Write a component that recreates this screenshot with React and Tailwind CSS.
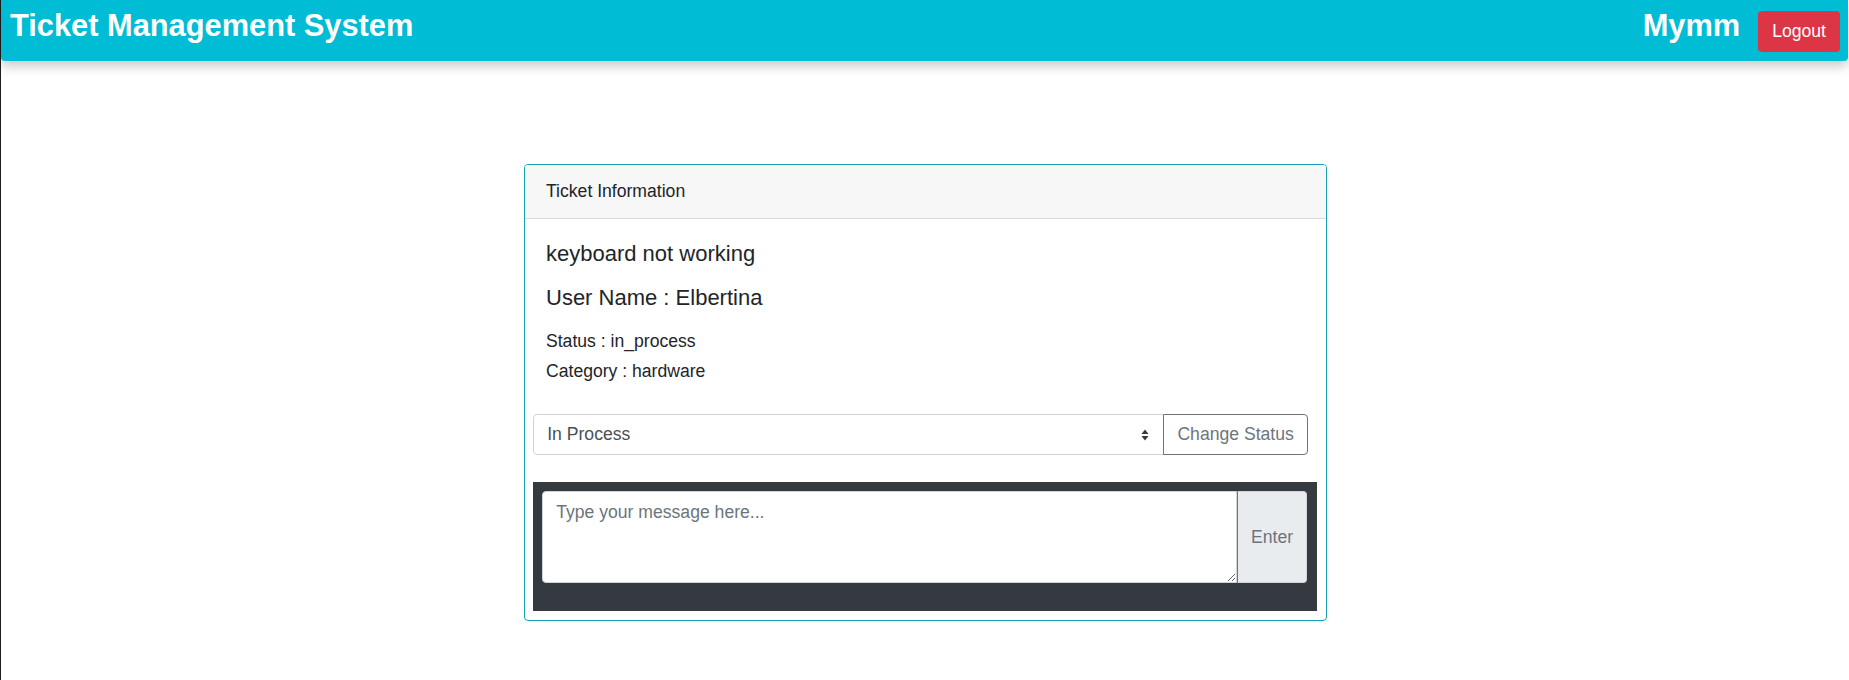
import React from "react";

function SortArrows() {
  return (
    <svg width="8" height="12" viewBox="0 0 8 12" className="shrink-0">
      <path d="M4 0.5 L7.5 5 L0.5 5 Z" fill="#343a40" />
      <path d="M4 11.5 L7.5 7 L0.5 7 Z" fill="#343a40" />
    </svg>
  );
}

export default function App() {
  return (
    <div className="min-h-[680px] bg-white border-l border-[#1e1e1e] font-['Liberation_Sans',Arial,sans-serif] text-[#212529]">
      <nav className="h-[61px] mr-px bg-[#00bcd4] rounded-b-[4px] shadow-[0_5px_12px_rgba(0,0,0,0.22)] flex justify-between items-start pl-[9px] pr-[8px] pt-[8px]">
        <h1 className="text-[30.8px] font-bold leading-[36px] text-white">Ticket Management System</h1>
        <div className="flex items-start">
          <span className="text-[30.8px] font-bold leading-[36px] text-white">Mymm</span>
          <button className="ml-[18px] mt-[3px] h-[41px] px-[14px] bg-[#dc3545] rounded-[4px] text-white text-[17.6px] leading-[26.4px]">
            Logout
          </button>
        </div>
      </nav>

      <div className="pl-px">
        <div className="w-[803px] mx-auto mt-[103px] border border-[#17a2b8] rounded-[4px] overflow-hidden">
          <div className="bg-[#f7f7f7] border-b border-[#dadada] px-[21px] py-[13.2px] text-[17.6px] leading-[26.4px]">
            Ticket Information
          </div>
          <div className="pt-[22px] pb-[9px]">
            <div className="px-[21px]">
              <h5 className="text-[22px] leading-[26.4px]">keyboard not working</h5>
              <h5 className="text-[22px] leading-[26.4px] mt-[17.4px]">User Name : Elbertina</h5>
              <p className="text-[17.6px] leading-[30px] mt-[15.3px]">Status : in_process</p>
              <p className="text-[17.6px] leading-[30px]">Category : hardware</p>
            </div>

            <div className="flex ml-[8px] mr-[18px] mt-[27.6px]">
              <div className="flex-1 h-[41.6px] border border-[#ced4da] rounded-l-[4px] flex items-center justify-between pl-[13.2px] pr-[14px] text-[17.6px] leading-[26.4px] text-[#495057]">
                <span>In Process</span>
                <SortArrows />
              </div>
              <button className="-ml-px h-[41.6px] px-[13.2px] border border-[#6c757d] rounded-r-[4px] text-[#6c757d] text-[17.6px] leading-[26.4px] bg-white">
                Change Status
              </button>
            </div>

            <div className="ml-[8px] mr-[9px] mt-[26.3px] bg-[#343a40] pl-[9px] pr-[9.7px] pt-[9.3px] pb-[27.3px] flex">
              <textarea
                placeholder="Type your message here..."
                className="flex-1 h-[92.4px] bg-white border border-[#ced4da] rounded-l-[4px] px-[13.2px] py-[6.6px] text-[17.6px] leading-[26.4px] text-[#495057] placeholder:text-[#6c757d] outline-none"
              />
              <span className="w-[70.6px] h-[92.4px] flex items-center justify-center bg-[#e9ecef] border border-[#ced4da] border-l-[#6c757d] rounded-r-[4px] text-[#6c757d] text-[17.6px] leading-[26.4px]">
                Enter
              </span>
            </div>
          </div>
        </div>
      </div>
    </div>
  );
}
